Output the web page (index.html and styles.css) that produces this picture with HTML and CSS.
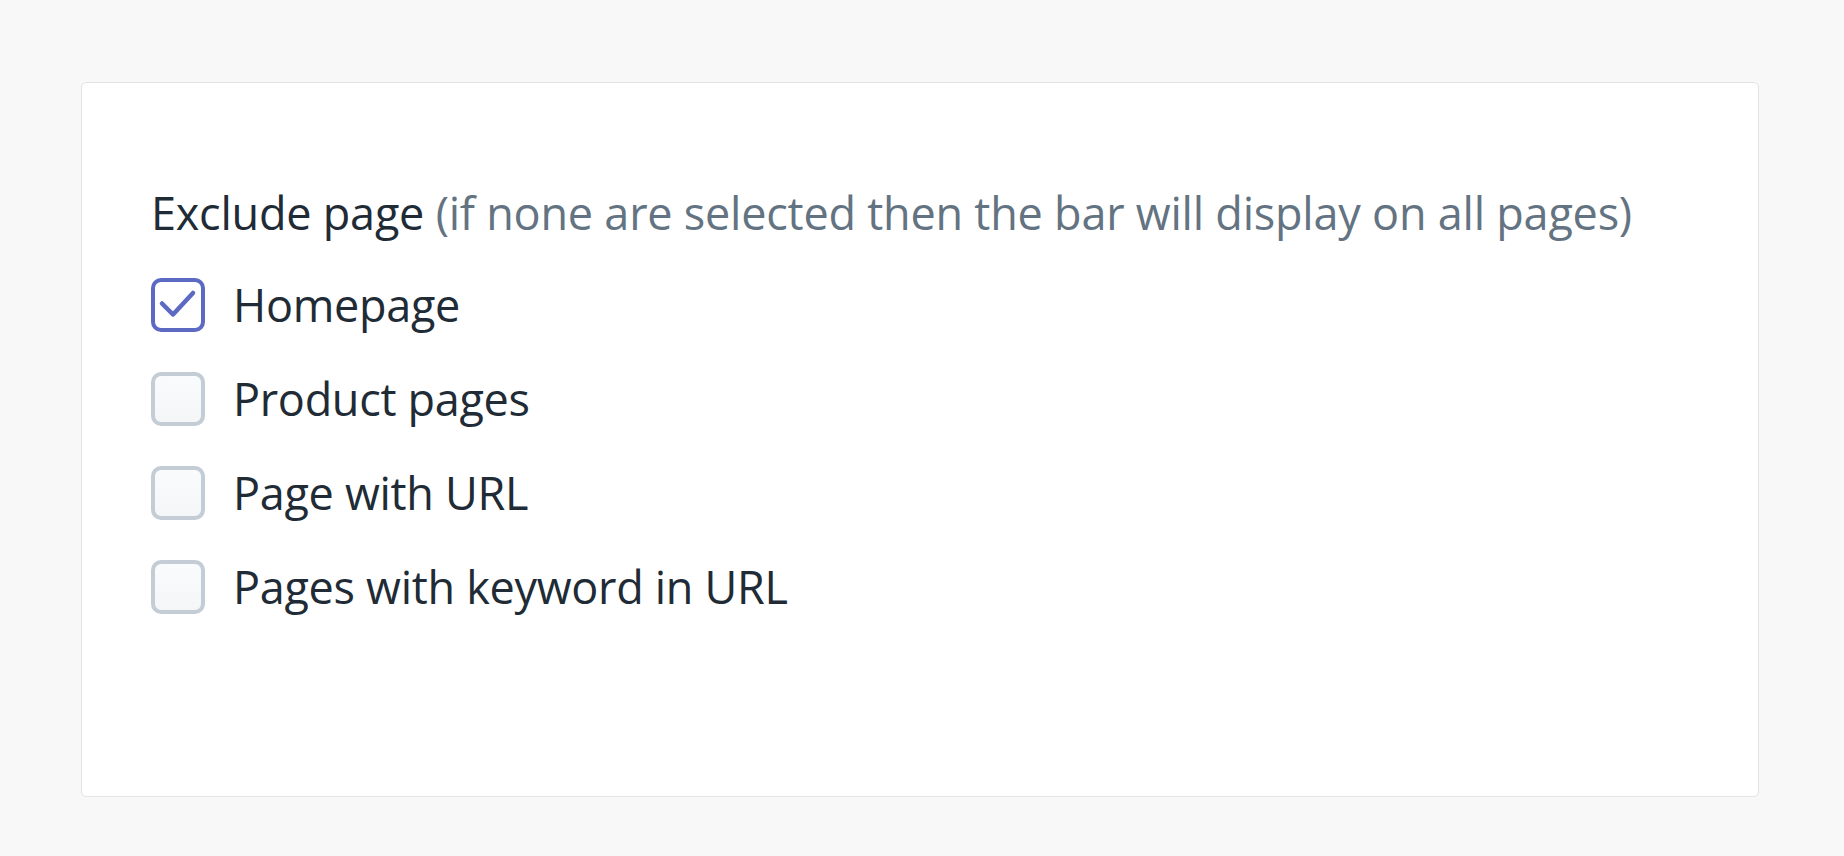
FILE: index.html
```html
<!DOCTYPE html>
<html lang="en">
<head>
<meta charset="utf-8">
<title>Exclude page</title>
<link rel="stylesheet" href="styles.css">
</head>
<body>
<div class="card">
  <p class="heading">Exclude page <span class="hint">(if none are selected then the bar will display on all pages)</span></p>
  <ul class="options">
    <li class="option">
      <span class="box box-checked">
        <svg viewBox="0 0 54 54" width="54" height="54" aria-hidden="true"><path d="M11 25.5 L22 36.5 L42 15" fill="none" stroke="#5c6ac4" stroke-width="4.5" stroke-linecap="round" stroke-linejoin="round"/></svg>
      </span>
      <span class="label">Homepage</span>
    </li>
    <li class="option">
      <span class="box"></span>
      <span class="label">Product pages</span>
    </li>
    <li class="option">
      <span class="box"></span>
      <span class="label">Page with URL</span>
    </li>
    <li class="option">
      <span class="box"></span>
      <span class="label">Pages with keyword in URL</span>
    </li>
  </ul>
</div>
</body>
</html>
```

FILE: styles.css
```css
* { box-sizing: border-box; }
html, body { margin: 0; padding: 0; }
body {
  background: #f8f8f8;
  font-family: "Open Sans", "Noto Sans", sans-serif;
  color: #212b36;
  width: 1844px;
  height: 856px;
  overflow: hidden;
}
.card {
  margin: 82px 85px 0 81px;
  height: 715px;
  background: #ffffff;
  border: 1px solid #e1e3e6;
  border-radius: 5px;
  padding: 98px 0 0 69px;
}
.heading {
  margin: 0;
  font-size: 45px;
  letter-spacing: -0.22px;
  line-height: 64px;
  color: #212b36;
  white-space: nowrap;
}
.hint { color: #637381; }
.options {
  list-style: none;
  margin: 33px 0 0 0;
  padding: 0;
  display: flex;
  flex-direction: column;
  gap: 40px;
}
.option {
  display: flex;
  align-items: center;
  height: 54px;
}
.box {
  flex: 0 0 54px;
  width: 54px;
  height: 54px;
  border: 4px solid #c4cdd5;
  border-radius: 10px;
  background: linear-gradient(#fafbfc, #f4f6f8);
  position: relative;
}
.box-checked {
  border-color: #5c6ac4;
  background: #ffffff;
}
.box svg {
  position: absolute;
  left: -4px;
  top: -4px;
}
.label {
  margin-left: 28px;
  font-size: 45px;
  letter-spacing: -0.3px;
  line-height: 54px;
  color: #212b36;
  white-space: nowrap;
}
```
